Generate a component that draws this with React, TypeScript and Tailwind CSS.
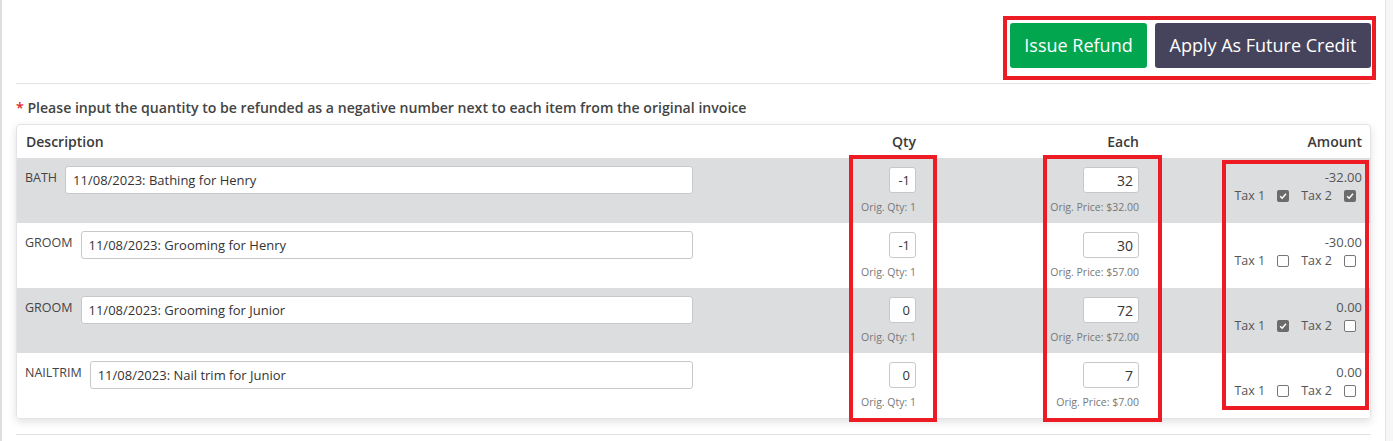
import type { FC } from "react";

type Line = {
  code: string;
  desc: string;
  qty: string;
  origQty: number;
  each: string;
  origPrice: string;
  amount: string;
  tax1: boolean;
  tax2: boolean;
};

const lines: Line[] = [
  { code: "BATH", desc: "11/08/2023: Bathing for Henry", qty: "-1", origQty: 1, each: "32", origPrice: "$32.00", amount: "-32.00", tax1: true, tax2: true },
  { code: "GROOM", desc: "11/08/2023: Grooming for Henry", qty: "-1", origQty: 1, each: "30", origPrice: "$57.00", amount: "-30.00", tax1: false, tax2: false },
  { code: "GROOM", desc: "11/08/2023: Grooming for Junior", qty: "0", origQty: 1, each: "72", origPrice: "$72.00", amount: "0.00", tax1: true, tax2: false },
  { code: "NAILTRIM", desc: "11/08/2023: Nail trim for Junior", qty: "0", origQty: 1, each: "7", origPrice: "$7.00", amount: "0.00", tax1: false, tax2: false },
];

const Check: FC<{ checked: boolean }> = ({ checked }) =>
  checked ? (
    <span className="flex h-[12px] w-[12px] items-center justify-center rounded-[2px] bg-[#6b6b6b]">
      <svg viewBox="0 0 12 12" className="h-[10px] w-[10px]">
        <path d="M2.5 6.2 L5 8.6 L9.6 3.4" fill="none" stroke="#fff" strokeWidth="1.8" />
      </svg>
    </span>
  ) : (
    <span className="block h-[12px] w-[12px] rounded-[2px] border border-[#767676] bg-white" />
  );

const Row: FC<{ line: Line; shaded: boolean }> = ({ line, shaded }) => (
  <div
    className={`grid h-[65px] grid-cols-[815px_76px_223px_223px] pl-[8px] pr-[9px] ${
      shaded ? "bg-[#dcdddf]" : "bg-white"
    }`}
  >
    <div className="flex w-[668px] items-start gap-[8px] pt-[8px]">
      <span className="pt-[3px] text-[12.5px] text-[#444]">{line.code}</span>
      <input
        readOnly
        value={line.desc}
        className="h-[28px] flex-1 rounded-[3px] border border-[#c8c8c8] bg-white px-[7px] text-[13px] text-[#333] outline-none"
      />
    </div>
    <div className="flex flex-col items-end pt-[9px]">
      <input
        readOnly
        value={line.qty}
        className="h-[26px] w-[27px] rounded-[3px] border border-[#c8c8c8] bg-white pr-[5px] text-right text-[13px] text-[#333] outline-none"
      />
      <span className="mt-[7px] text-[10.5px] text-[#777]">Orig. Qty: {line.origQty}</span>
    </div>
    <div className="flex flex-col items-end pt-[9px]">
      <input
        readOnly
        value={line.each}
        className="h-[26px] w-[56px] rounded-[3px] border border-[#c8c8c8] bg-white pr-[5px] text-right text-[14px] text-[#333] outline-none"
      />
      <span className="mt-[7px] text-[10.5px] text-[#777]">Orig. Price: {line.origPrice}</span>
    </div>
    <div className="flex flex-col items-end pt-[10px] text-[#555]">
      <span className="text-[13px] leading-[18px]">{line.amount}</span>
      <div className="mt-[1px] flex items-center text-[12.5px]">
        <span>Tax 1</span>
        <span className="ml-[12px]">
          <Check checked={line.tax1} />
        </span>
        <span className="ml-[12px]">Tax 2</span>
        <span className="ml-[12px] mr-[6px]">
          <Check checked={line.tax2} />
        </span>
      </div>
    </div>
  </div>
);

export default function App() {
  return (
    <div className="min-h-screen bg-[#f6f6f6] font-['Open_Sans',sans-serif]">
      <div className="relative w-[1386px] border-l-2 border-r border-l-[#dedede] border-r-[#e4e4e4] bg-white pb-[8px] pl-[14px] pr-[14px]">
        <div className="flex justify-end gap-[8px] pt-[23px]">
          <button className="h-[45px] w-[137px] rounded-[3px] bg-[#02a64f] text-[18px] text-white">
            Issue Refund
          </button>
          <button className="h-[45px] w-[216px] rounded-[3px] bg-[#46445c] text-[18px] text-white">
            Apply As Future Credit
          </button>
        </div>

        <div className="mt-[15px] border-t border-[#e2e2e2]" />

        <p className="mt-[14px] text-[14.1px] font-semibold leading-[20px] text-[#444]">
          <span className="text-[#e3262d]">*</span> Please input the quantity to be refunded as a
          negative number next to each item from the original invoice
        </p>

        <div className="mt-[6px] overflow-hidden rounded-[4px] border border-[#e4e4e8] shadow-[0_3px_8px_rgba(0,0,0,0.12)]">
          <div className="grid h-[33px] grid-cols-[814px_76px_223px_223px] items-center pl-[9px] pr-[9px] text-[14px] font-semibold text-[#3a3a3a]">
            <span>Description</span>
            <span className="text-right">Qty</span>
            <span className="text-right">Each</span>
            <span className="text-right">Amount</span>
          </div>
          {lines.map((line, i) => (
            <Row key={i} line={line} shaded={i % 2 === 0} />
          ))}
        </div>

        <div className="mt-[15px] border-t border-[#e2e2e2]" />

        {/* annotation boxes */}
        <div className="pointer-events-none absolute left-[1001px] top-[16px] h-[64px] w-[373px] border-4 border-[#ed1c24]" />
        <div className="pointer-events-none absolute left-[847px] top-[155px] h-[267px] w-[88px] border-4 border-[#ed1c24]" />
        <div className="pointer-events-none absolute left-[1041px] top-[155px] h-[267px] w-[119px] border-4 border-[#ed1c24]" />
        <div className="pointer-events-none absolute left-[1220px] top-[160px] h-[250px] w-[147px] border-4 border-[#ed1c24]" />
      </div>
    </div>
  );
}
